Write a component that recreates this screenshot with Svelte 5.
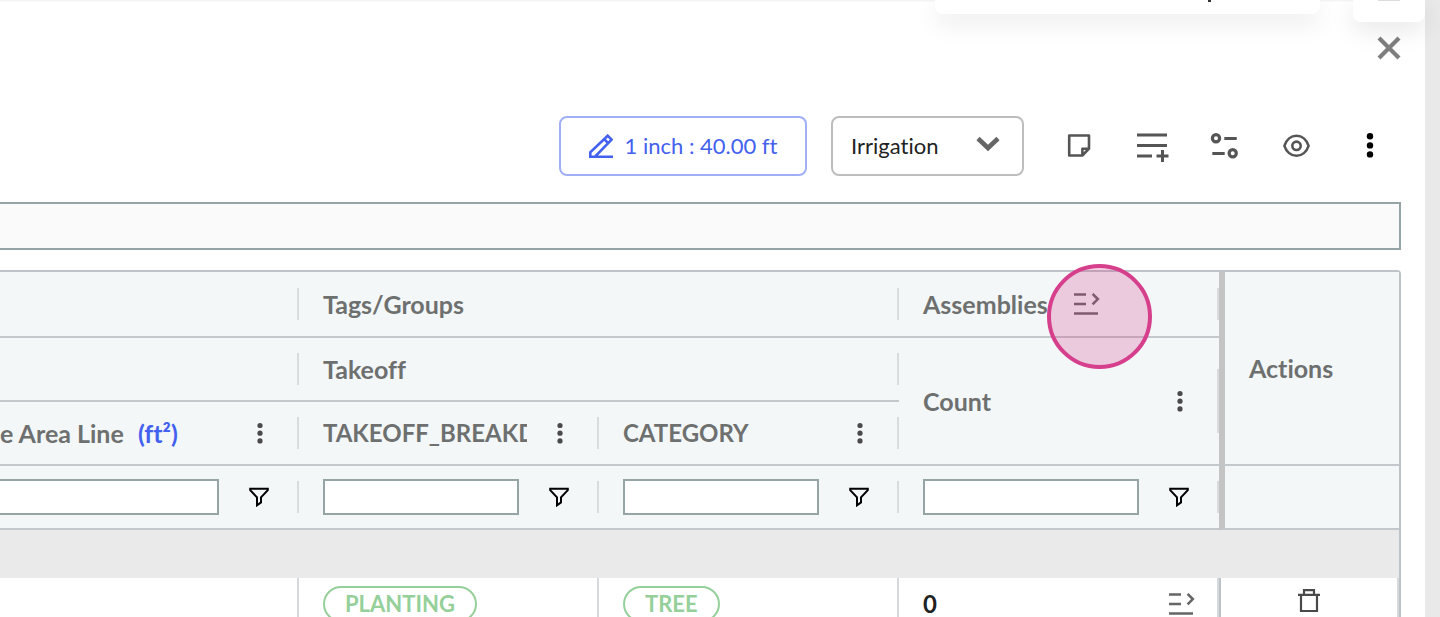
<script>
  // --- Toolbar state ---
  let scale = $state('1 inch : 40.00 ft')
  let systems = ['Irrigation', 'Planting', 'Lighting']
  let system = $state('Irrigation')
  let search = $state('')

  // --- Table state ---
  let filters = $state({ area: '', breakdown: '', category: '', count: '' })
  let rows = $state([{ area: '', breakdown: 'PLANTING', category: 'TREE', count: 0 }])

  const filterColumns = [
    { key: 'area', label: 'Filter area line' },
    { key: 'breakdown', label: 'Filter takeoff breakdown' },
    { key: 'category', label: 'Filter category' },
    { key: 'count', label: 'Filter count' },
  ]

  function removeRow(index) {
    rows.splice(index, 1)
  }
</script>

{#snippet kebab(label)}
  <button type="button" class="icon-button" aria-label={label}>
    <svg width="20" height="24" viewBox="0 0 20 24" fill="#4a4a4a">
      <circle cx="11" cy="4.5" r="2.6" />
      <circle cx="11" cy="12.2" r="2.6" />
      <circle cx="11" cy="19.9" r="2.6" />
    </svg>
  </button>
{/snippet}

{#snippet assembly(label)}
  <button type="button" class="icon-button" aria-label={label}>
    <svg width="26" height="24" viewBox="0 0 26 24" fill="none" stroke="#666" stroke-width="2.6">
      <path d="M0 2.5h12M0 12h12M0 21.5h24M18.6 1.8l5.2 5.3-5.2 5.3" />
    </svg>
  </button>
{/snippet}

<main>
  <section class="panel">
    <div class="panel-top">
      <button type="button" class="icon-button" aria-label="Close">
        <svg width="24" height="24" viewBox="0 0 24 24" stroke="#7f7f7f" stroke-width="4.2">
          <path d="M2 2l20 20M22 2L2 22" />
        </svg>
      </button>
    </div>

    <div class="toolbar">
      <button type="button" class="scale-button">
        <svg width="24" height="24" viewBox="0 0 24 24" fill="none" stroke="#4361ee" stroke-width="2.6">
          <path d="M1.3 22.7v-4.5L18.7 1.7l3.9 3.9L6 22.7zM15 5l4.2 4.2M1 22.7h23" />
        </svg>
        {scale}
      </button>

      <div class="select-box">
        <select bind:value={system} aria-label="System">
          {#each systems as name}
            <option>{name}</option>
          {/each}
        </select>
        <svg class="chevron" width="24" height="16" viewBox="0 0 24 16" fill="none" stroke="#666" stroke-width="4.6">
          <path d="M2 2.5l10 9.5 10-9.5" />
        </svg>
      </div>

      <div class="tools">
        <button type="button" class="icon-button" aria-label="Notes">
          <svg width="48" height="48" viewBox="0 0 48 48" fill="none" stroke="#555" stroke-width="2.6">
            <path d="M12.2 13.5h19.8v13.2l-6.6 6.8H12.2zM25.4 33v-6.3H32" stroke-linejoin="round" />
          </svg>
        </button>
        <button type="button" class="icon-button" aria-label="Add row">
          <svg width="48" height="48" viewBox="0 0 48 48" fill="none" stroke="#555" stroke-width="3">
            <path d="M8 13h30M8 23.5h30M8 34h15M27.5 34h12M33.5 28v12" />
          </svg>
        </button>
        <button type="button" class="icon-button" aria-label="Column settings">
          <svg width="48" height="48" viewBox="0 0 48 48" fill="none" stroke="#555" stroke-width="3.2">
            <circle cx="15" cy="16.3" r="3.6" />
            <path d="M23.3 16.5h12.4M11.3 31.5h12.4" />
            <circle cx="31.7" cy="31.3" r="3.6" />
          </svg>
        </button>
        <button type="button" class="icon-button" aria-label="Visibility">
          <svg width="48" height="48" viewBox="0 0 48 48" fill="none" stroke="#555" stroke-width="2.6">
            <path d="M11.4 23.8c2-6 6.6-10 12.1-10s10.1 4 12.1 10c-2 6-6.6 10-12.1 10s-10.1-4-12.1-10z" stroke-linejoin="round" />
            <circle cx="23.5" cy="23.8" r="4.2" />
          </svg>
        </button>
        <button type="button" class="icon-button" aria-label="More">
          <svg width="48" height="48" viewBox="0 0 48 48" fill="#000">
            <circle cx="25" cy="14.3" r="3.2" />
            <circle cx="25" cy="23.4" r="3.2" />
            <circle cx="25" cy="32.4" r="3.2" />
          </svg>
        </button>
      </div>
    </div>

    <input class="search" type="text" bind:value={search} aria-label="Search" />

    <div class="grid">
      <table>
        <colgroup>
          <col />
          <col class="col-tag" />
          <col class="col-tag" />
          <col class="col-count" />
          <col class="col-actions" />
        </colgroup>
        <thead>
          <tr class="first">
            <th class="sep"></th>
            <th class="sep" colspan="2">Tags/Groups</th>
            <th class="sep">
              <div class="head assemblies"><span>Assemblies</span>{@render assembly('Expand assemblies')}</div>
            </th>
            <th class="actions" rowspan="3">Actions</th>
          </tr>
          <tr>
            <th class="sep"></th>
            <th class="sep" colspan="2">Takeoff</th>
            <th class="sep tall" rowspan="2">
              <div class="head"><span class="name">Count</span>{@render kebab('Count menu')}</div>
            </th>
          </tr>
          <tr>
            <th class="sep area">
              <div class="head">
                <span class="name">e Area Line <span class="unit">(ft²)</span></span>{@render kebab('Area line menu')}
              </div>
            </th>
            <th class="sep">
              <div class="head"><span class="name tag">TAKEOFF_BREAKDOWN</span>{@render kebab('Breakdown menu')}</div>
            </th>
            <th class="sep">
              <div class="head"><span class="name tag">CATEGORY</span>{@render kebab('Category menu')}</div>
            </th>
          </tr>
          <tr>
            {#each filterColumns as column}
              <td class="sep {column.key}">
                <div class="filter">
                  <input type="text" bind:value={filters[column.key]} aria-label={column.label} />
                  <button type="button" class="icon-button" aria-label="{column.label} options">
                    <svg width="20" height="20" viewBox="0 0 20 20" fill="none" stroke="#000" stroke-width="2">
                      <path d="M1.2 1.8h17.6v1.3L12 10.4v5L8 18.3v-7.9L1.2 3.1z" />
                    </svg>
                  </button>
                </div>
              </td>
            {/each}
            <td class="actions"></td>
          </tr>
        </thead>
        <tbody>
          <tr class="group"><td colspan="5"></td></tr>
          {#each rows as row, i}
            <tr class="data">
              <td>{row.area}</td>
              <td><span class="pill">{row.breakdown}</span></td>
              <td><span class="pill">{row.category}</span></td>
              <td>
                <div class="count-cell"><span>{row.count}</span>{@render assembly('Expand row')}</div>
              </td>
              <td class="row-actions">
                <button type="button" class="icon-button" aria-label="Delete" onclick={() => removeRow(i)}>
                  <svg width="24" height="32" viewBox="0 0 24 32" fill="none" stroke="#4a4a4a" stroke-width="2.2">
                    <path d="M1 6.8h22M7 6.5V2.2h10v4.3M4 7v16h16V7" />
                  </svg>
                </button>
              </td>
            </tr>
          {/each}
        </tbody>
      </table>
      <div class="pointer"></div>
    </div>
  </section>

  <div class="card card-wide"><span class="tick"></span></div>
  <div class="card card-small"><span class="rule"></span></div>
</main>

<style>
  :global(body) {
    margin: 0;
    background: #e9e9e9;
  }

  main {
    position: relative;
    height: 100vh;
    overflow: hidden;
    padding-right: 15px;
    box-sizing: border-box;
    font-family: Lato, 'Liberation Sans', sans-serif;
    font-size: 25px;
    font-variant-ligatures: none;
    line-height: 28px;
    color: #222;
  }

  .panel {
    min-height: 100%;
    padding-right: 24px;
    background: #fff;
    box-shadow: inset 0 2px 2px -1px #f0f0f0;
  }

  button,
  input,
  select {
    font: inherit;
    box-sizing: border-box;
  }

  .icon-button {
    display: flex;
    flex-shrink: 0;
    padding: 0;
    border: none;
    background: none;
    cursor: pointer;
  }

  .panel-top {
    display: flex;
    justify-content: flex-end;
    padding: 36px 0 56px;
  }

  /* --- Toolbar --- */
  .toolbar {
    display: flex;
    justify-content: flex-end;
    align-items: center;
    gap: 24px;
    padding-right: 8px;
    margin-bottom: 26px;
  }

  .scale-button {
    display: flex;
    align-items: center;
    justify-content: center;
    gap: 12px;
    width: 248px;
    height: 60px;
    border: 2px solid #a1b0f6;
    border-radius: 8px;
    background: #fff;
    color: #4361ee;
    font-size: 22px;
    cursor: pointer;
  }

  .select-box {
    position: relative;
    width: 193px;
    margin-right: 9px;
  }

  .select-box select {
    display: block;
    width: 100%;
    height: 60px;
    padding: 0 48px 0 18px;
    border: 2px solid #bdbdbd;
    border-radius: 8px;
    background: #fff;
    color: #222;
    font-size: 22px;
    appearance: none;
  }

  .chevron {
    position: absolute;
    right: 24px;
    top: 20px;
    pointer-events: none;
  }

  .tools {
    display: flex;
    gap: 24px;
  }

  .search {
    display: block;
    width: 100%;
    height: 48px;
    margin-bottom: 20px;
    border: 2px solid #95a5a6;
    border-left: none;
    background: #fafafa;
  }

  /* --- Table --- */
  .grid {
    position: relative;
    border: 2px solid #bdc3c7;
    border-width: 2px 2px 0 0;
    border-top-right-radius: 4px;
  }

  table {
    width: 100%;
    table-layout: fixed;
    border-collapse: separate;
    border-spacing: 0;
  }

  .col-tag {
    width: 300px;
  }

  .col-count {
    width: 320px;
  }

  .col-actions {
    width: 180px;
  }

  th,
  td {
    box-sizing: border-box;
    padding: 0 0 0 24px;
    text-align: left;
    vertical-align: middle;
  }

  thead tr {
    height: 64px;
  }

  thead .first {
    height: 66px;
  }

  thead th,
  thead td {
    border-bottom: 2px solid #c3c8cc;
    background-color: #f3f7f8;
    color: #6e706f;
  }

  .sep {
    background-image: linear-gradient(#d8dcdf, #d8dcdf);
    background-repeat: no-repeat;
    background-position: right center;
    background-size: 2px 32px;
  }

  .tall {
    background-size: 2px 64px;
  }

  thead .actions {
    border-left: 6px solid #c4c4c4;
  }

  .area {
    padding-left: 0;
  }

  .head {
    display: flex;
    align-items: center;
    gap: 22px;
    padding-right: 30px;
  }

  .assemblies {
    gap: 26px;
  }

  .name {
    flex: 1;
    overflow: hidden;
    white-space: nowrap;
  }

  .tag {
    font-size: 24px;
  }

  .unit {
    margin-left: 8px;
    color: #4361ee;
  }

  .filter {
    display: flex;
    align-items: center;
    gap: 30px;
    padding-right: 30px;
  }

  .filter input {
    flex: 1;
    min-width: 0;
    height: 36px;
    border: 2px solid #95a5a6;
    background: #fff;
  }

  .area input {
    border-left: none;
  }

  .group td {
    height: 48px;
    background: #eaeaea;
  }

  .data td {
    height: 52px;
    border-right: 2px solid #d5d9dc;
    background: #fff;
    font-weight: bold;
  }

  .data .row-actions {
    padding: 0;
    border-left: 2px solid #bdc3c7;
  }

  .row-actions .icon-button {
    margin: 0 auto;
  }

  .pill {
    display: inline-flex;
    align-items: center;
    height: 36px;
    padding: 0 20px;
    box-sizing: border-box;
    border: 2px solid #95d09a;
    border-radius: 18px;
    color: #95d09a;
    font-size: 22px;
    vertical-align: middle;
  }

  .count-cell {
    display: flex;
    align-items: center;
    justify-content: space-between;
    padding-right: 22px;
    font-size: 24px;
  }

  /* --- Things floating over the page --- */
  .pointer {
    position: absolute;
    top: -8px;
    right: 247px;
    width: 105px;
    height: 105px;
    box-sizing: border-box;
    border: 4px solid #d63f8c;
    border-radius: 50%;
    background: rgba(214, 59, 139, 0.24);
    pointer-events: none;
  }

  .card {
    position: absolute;
    top: 0;
    background: #fff;
    border-radius: 0 0 8px 8px;
    box-shadow: 0 8px 24px rgba(0, 0, 0, 0.1);
  }

  .card-wide {
    right: 120px;
    width: 385px;
    height: 14px;
  }

  .card-small {
    right: 15px;
    width: 72px;
    height: 22px;
  }

  .tick,
  .rule {
    display: block;
    width: 3px;
    height: 2px;
    margin-left: 273px;
    background: #333;
  }

  .rule {
    width: 22px;
    height: 1px;
    margin-left: 25px;
    background: #ddd;
  }
</style>
